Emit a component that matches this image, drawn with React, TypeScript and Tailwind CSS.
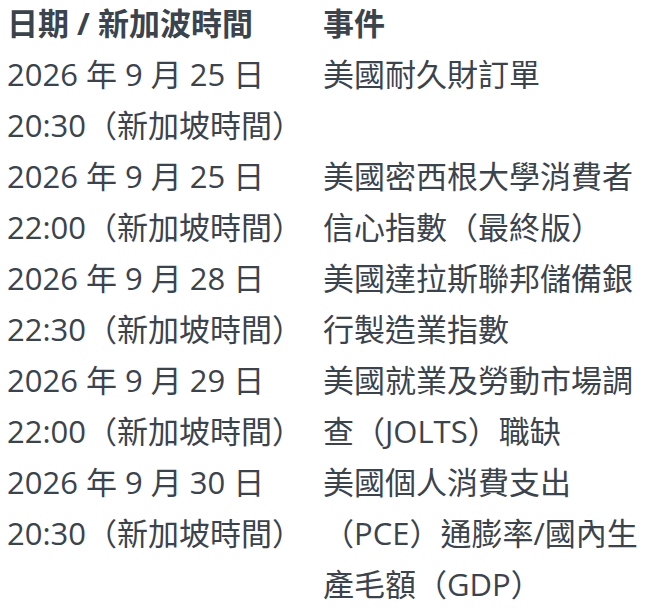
const rows = [
  { date: "2026 年 9 月 25 日", time: "20:30（新加坡時間）", event: "美國耐久財訂單" },
  { date: "2026 年 9 月 25 日", time: "22:00（新加坡時間）", event: "美國密西根大學消費者信心指數（最終版）" },
  { date: "2026 年 9 月 28 日", time: "22:30（新加坡時間）", event: "美國達拉斯聯邦儲備銀行製造業指數" },
  { date: "2026 年 9 月 29 日", time: "22:00（新加坡時間）", event: "美國就業及勞動市場調查（JOLTS）職缺" },
  { date: "2026 年 9 月 30 日", time: "20:30（新加坡時間）", event: "美國個人消費支出（PCE）通膨率/國內生產毛額（GDP）" },
];

export default function App() {
  return (
    <div
      className="bg-white w-[672px] h-[612px] overflow-hidden text-[#3b434c] text-[31px] leading-[51px]"
      style={{ fontFamily: '"Open Sans", "Noto Sans CJK TC", sans-serif' }}
    >
      <table className="border-collapse -mt-[2px]">
        <thead>
          <tr className="font-bold">
            <th className="text-left align-top pl-[7px] w-[323px] p-0">日期 / 新加波時間</th>
            <th className="text-left align-top p-0">事件</th>
          </tr>
        </thead>
        <tbody>
          {rows.map((r, i) => (
            <tr key={i}>
              <td className="align-top pl-[7px] p-0 whitespace-nowrap">
                <div>{r.date}</div>
                <div>{r.time}</div>
              </td>
              <td className="align-top p-0 w-[330px]">{r.event}</td>
            </tr>
          ))}
        </tbody>
      </table>
    </div>
  );
}
